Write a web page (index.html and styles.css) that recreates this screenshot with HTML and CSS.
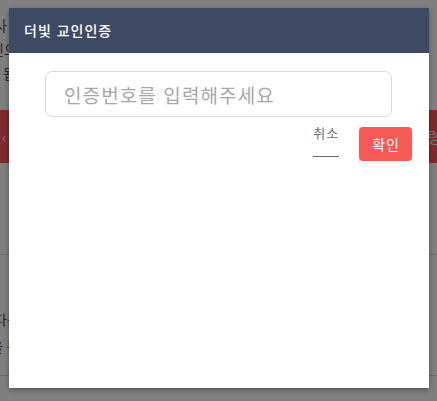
FILE: index.html
```html
<!DOCTYPE html>
<html lang="ko">
<head>
<meta charset="utf-8">
<title>더빛 교인인증</title>
<link rel="stylesheet" href="styles.css">
</head>
<body>
<div class="page">
  <div class="intro">
    <p class="line line-1">사ㅅ항을 꼭 확인하시고 안내에 따라 인증을 진행해 주시기 바랍니다 설</p>
    <p class="line line-2">인으로 등록된 성도님만 참여하실 수 있으며 자세한 내용은 교회 사무실로 문</p>
    <p class="line line-3">됩니다. 인증이 완료되면 서비스를 이용하실 수 있습니다.</p>
  </div>
  <div class="banner"><span class="banner-l">‹</span><span class="banner-r">령</span></div>
  <div class="section">
    <p class="line line-4">다음 내용을 확인해 주세요</p>
    <p class="line line-5">을 통해 인증번호를 받으실 수 있습니다</p>
  </div>
</div>
<div class="overlay"></div>
<div class="modal" role="dialog">
  <div class="modal-header">더빛 교인인증</div>
  <div class="modal-body">
    <input class="code-input" type="text" placeholder="인증번호를 입력해주세요">
    <div class="actions">
      <span class="btn-cancel">취소</span>
      <span class="btn-confirm">확인</span>
    </div>
  </div>
</div>
</body>
</html>
```
FILE: styles.css
```css
html, body {
  margin: 0;
  padding: 0;
}
body {
  width: 437px;
  height: 401px;
  overflow: hidden;
  position: relative;
  font-family: "Noto Sans CJK KR", "Noto Sans", sans-serif;
  background: #fff;
}
.page {
  width: 437px;
  height: 401px;
  overflow: hidden;
}
.intro {
  padding-top: 13px;
  height: 110px;
  box-sizing: border-box;
}
.line {
  margin: 0;
  font-size: 14px;
  line-height: 24px;
  height: 24px;
  color: #4a4a4a;
  white-space: nowrap;
  overflow: hidden;
}
.line-1 { margin-left: -6px; }
.line-2 { margin-left: -9px; }
.line-3 { margin-left: 3px; }
.banner {
  height: 53px;
  background: #ff565c;
  display: flex;
  justify-content: space-between;
  align-items: center;
  color: #fff;
  font-size: 15px;
  overflow: hidden;
}
.banner-l { margin-left: 2px; opacity: .8; }
.banner-r { margin-right: -4px; opacity: .9; }
.section {
  margin-top: 91px;
  border-top: 1px solid #d8d8d8;
  border-bottom: 1px solid #d8d8d8;
  height: 122px;
  padding-top: 52px;
  box-sizing: border-box;
}
.line-4 { margin-left: -6px; }
.line-5 { margin-left: -10px; margin-top: 3px; }

.overlay {
  position: absolute;
  inset: 0;
  background: rgba(0, 0, 0, 0.5);
}
.modal {
  position: absolute;
  left: 9px;
  top: 8px;
  width: 420px;
  height: 380px;
  background: #fff;
  box-shadow: 0 2px 5px rgba(0, 0, 0, 0.35);
  display: flex;
  flex-direction: column;
}
.modal-header {
  height: 45px;
  line-height: 45px;
  background: #3e4a64;
  color: #fff;
  font-size: 14px;
  font-weight: 500;
  letter-spacing: 1px;
  padding-left: 15px;
}
.modal-body {
  padding: 18px 17px 0 36px;
  display: flex;
  flex-direction: column;
}
.code-input {
  box-sizing: border-box;
  width: 347px;
  height: 46px;
  border: 1px solid #dadada;
  border-radius: 7px;
  padding: 0 0 0 18px;
  font-family: "Noto Sans CJK KR", "Noto Sans", sans-serif;
  font-size: 19px;
  font-weight: 400;
  letter-spacing: 1.1px;
  color: #555;
  outline: none;
}
.code-input::placeholder {
  color: #a6a6a6;
}
.actions {
  display: flex;
  justify-content: flex-end;
  align-items: flex-start;
  gap: 20px;
  margin-top: 6px;
}
.btn-cancel {
  font-size: 13px;
  line-height: 20px;
  letter-spacing: 1px;
  color: #6f6f6f;
  padding-bottom: 13px;
  border-bottom: 1px solid #666;
}
.btn-confirm {
  margin-top: 4px;
  height: 34px;
  line-height: 34px;
  padding: 0 12px 0 13px;
  background: #f55a56;
  color: #fff;
  font-size: 14px;
  letter-spacing: 1px;
  border-radius: 4px;
}
```
